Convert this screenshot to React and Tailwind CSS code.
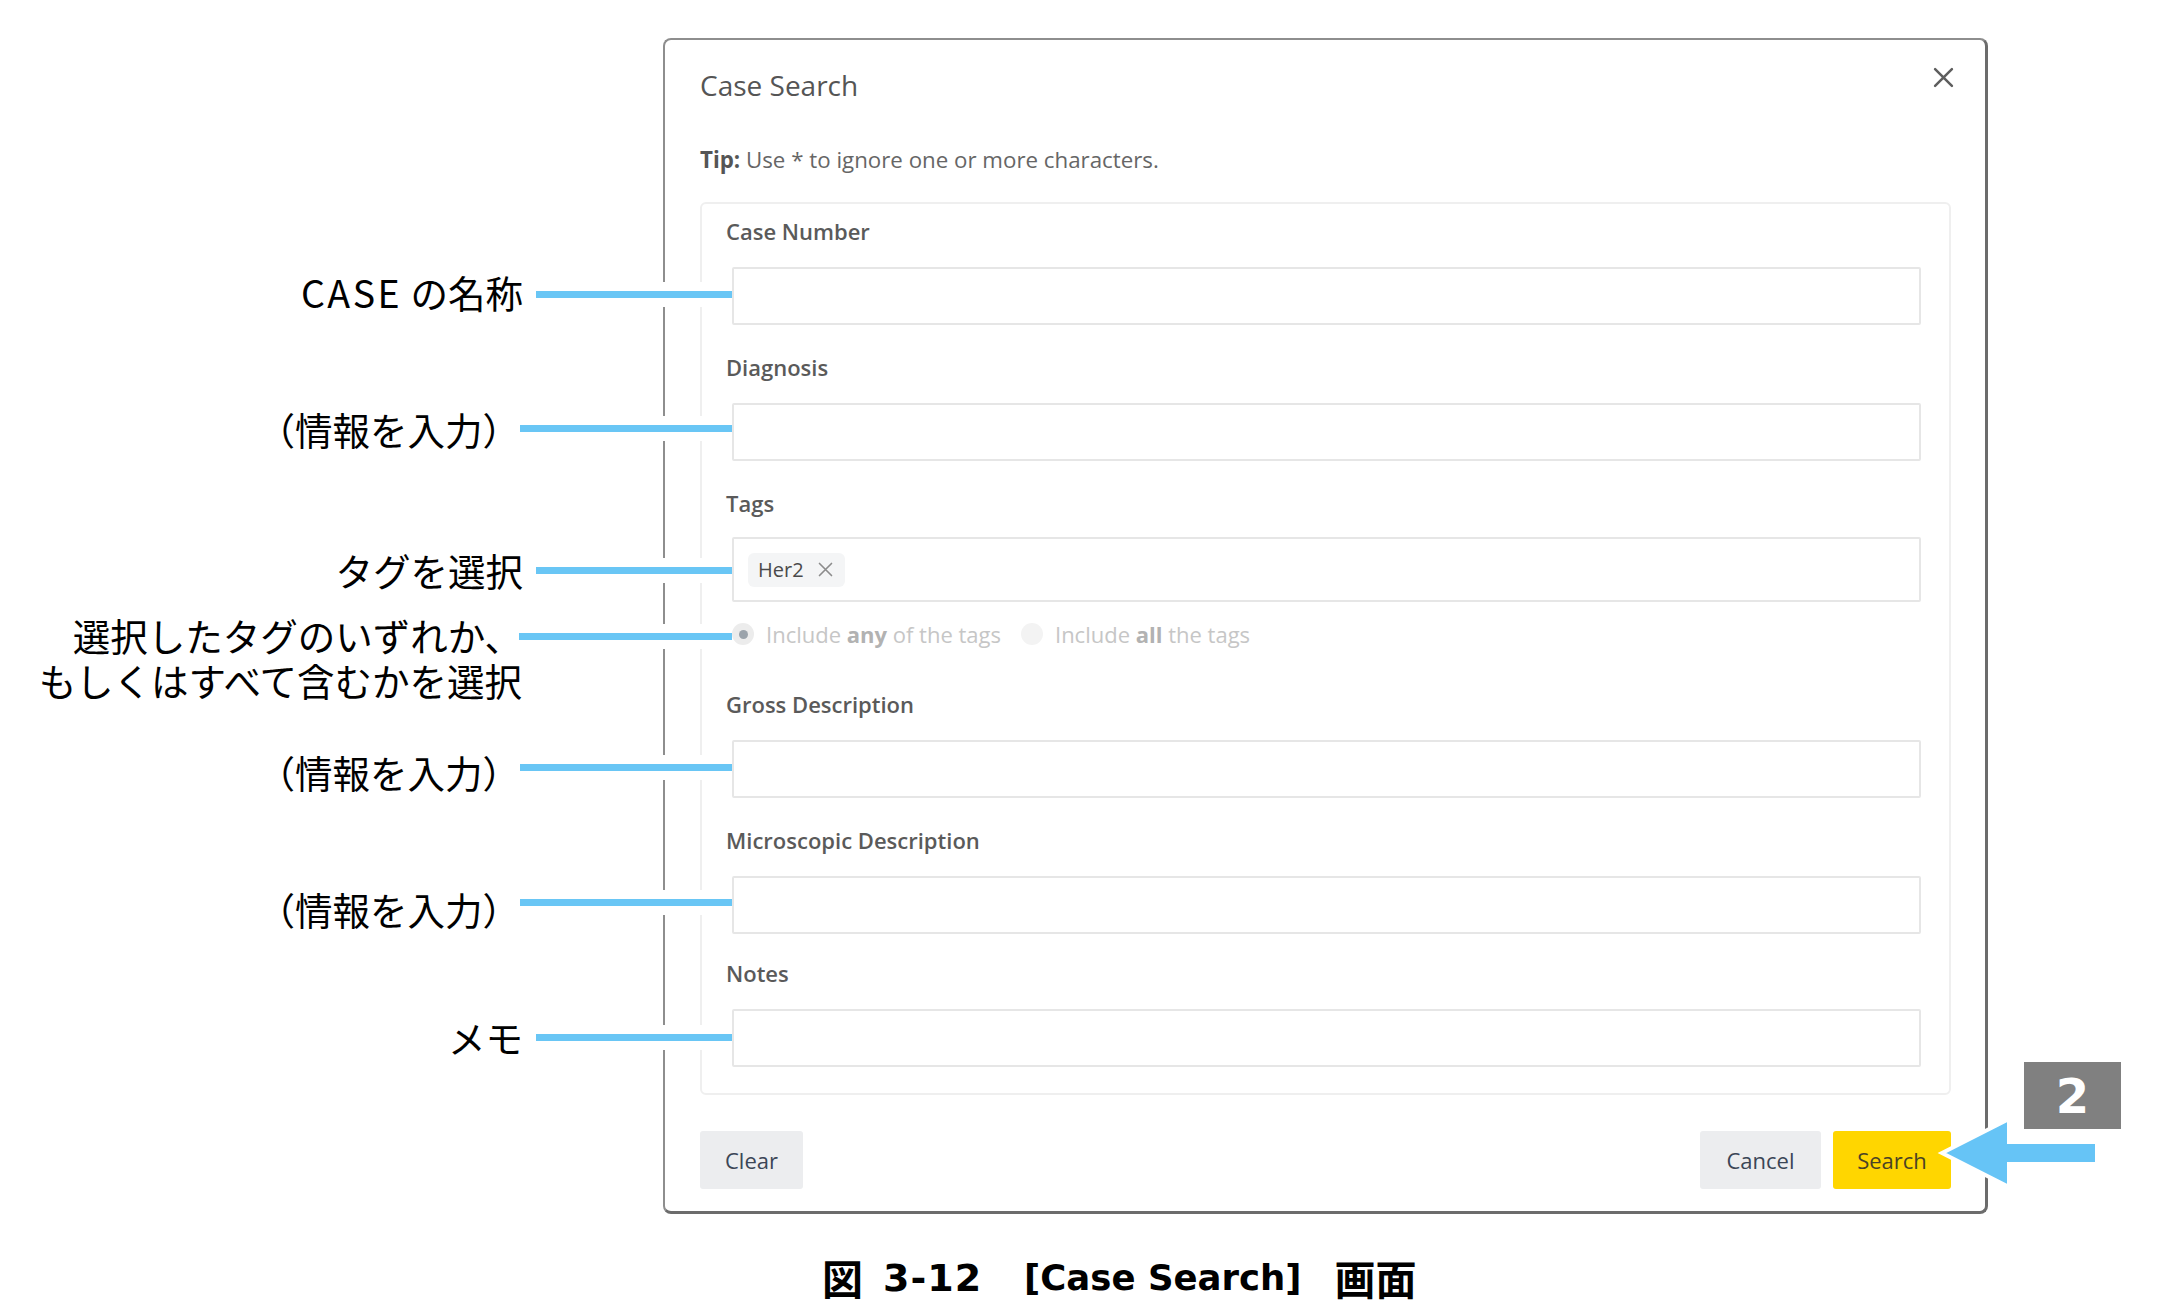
import { useState } from 'react';

const uiFont = { fontFamily: '"Segoe UI", "Open Sans", "Noto Sans", sans-serif' };
const jpFont = { fontFamily: '"Noto Sans CJK JP", "Noto Sans", sans-serif' };
const captionFont = { fontFamily: '"DejaVu Sans", "Noto Sans CJK JP", sans-serif' };

// callouts on the left: text, line centre (top + 22), text nudge, where the line starts, line width
const callouts = [
  { lines: [['CASE', ' の名称']], top: 272, nudge: -3, gap: 13, width: 196 },
  { lines: ['（情報を入力）'], top: 406, nudge: 0, gap: 0, width: 212 },
  { lines: ['タグを選択'], top: 548, nudge: -1, gap: 13, width: 196 },
  { lines: ['選択したタグのいずれか、', 'もしくはすべて含むかを選択'], top: 614, nudge: -2, gap: -3, width: 213 },
  { lines: ['（情報を入力）'], top: 745, nudge: 4, gap: 0, width: 212 },
  { lines: ['（情報を入力）'], top: 880, nudge: 6, gap: 0, width: 212 },
  { lines: ['メモ'], top: 1015, nudge: -1, gap: 13, width: 196 },
];

function CloseIcon({ size = 21, stroke = '#5e5e5e', width = 2.4 }) {
  return (
    <svg width={size} height={size} viewBox="0 0 20 20" fill="none">
      <path d="M2 2 L18 18 M18 2 L2 18" stroke={stroke} strokeWidth={width} strokeLinecap="round" />
    </svg>
  );
}

function Field({ label, children }) {
  return (
    <div className="flex flex-col">
      <label className="h-[30px] leading-[30px] text-[22px] font-semibold text-[#5a5a5a]">{label}</label>
      {children}
    </div>
  );
}

function TextInput() {
  return (
    <input
      type="text"
      className="mt-[21px] ml-[6px] mr-[4px] h-[58px] rounded-[2px] border-2 border-[#e6e6e6] bg-white px-3 text-[20px] outline-none"
    />
  );
}

function Callout({ lines, top, nudge, gap, width }) {
  return (
    <div className="absolute left-0 flex w-[732px] items-start justify-end" style={{ top }}>
      <div className="text-right text-[37.5px] leading-[45px] text-black" style={{ ...jpFont, marginTop: nudge }}>
        {lines.map((l, i) =>
          Array.isArray(l) ? (
            <div key={i}>
              <span className="tracking-[2.5px]">{l[0]}</span>
              {l[1]}
            </div>
          ) : (
            <div key={i}>{l}</div>
          )
        )}
      </div>
      <div className="flex h-[45px] items-center" style={{ marginLeft: gap }}>
        <div className="bg-white py-[9px]">
          <div className="h-[7px] bg-[#69c6f5]" style={{ width }} />
        </div>
      </div>
    </div>
  );
}

export default function App() {
  const [matchAll, setMatchAll] = useState(false);

  return (
    <div className="relative h-[1314px] w-[2160px] overflow-hidden bg-white">
      <div className="pt-[38px]">
        {/* dialog */}
        <div
          className="ml-[663px] w-[1325px] rounded-[8px] border-2 border-r-[3px] border-b-[3px] border-[#8e8e8e] border-r-[#6c6c6c] border-b-[#6c6c6c] bg-white pt-[25px] pr-[34px] pb-[22px] pl-[35px]"
          style={uiFont}
        >
          <div className="flex items-start justify-between">
            <h2 className="h-[40px] text-[28px] leading-[40px] font-normal text-[#555]">Case Search</h2>
            <button className="mt-[2px] mr-[-3px]">
              <CloseIcon />
            </button>
          </div>

          <p className="mt-[40px] h-[30px] text-[22.3px] leading-[30px] text-[#666]">
            <span className="font-bold text-[#555]">Tip:</span> Use * to ignore one or more characters.
          </p>

          {/* search fields */}
          <div className="mt-[27px] rounded-[6px] border-2 border-[#efefef] px-[24px] pt-[12px] pb-[26px]">
            <Field label="Case Number">
              <TextInput />
            </Field>
            <div className="mt-[27px]">
              <Field label="Diagnosis">
                <TextInput />
              </Field>
            </div>
            <div className="mt-[27px]">
              <Field label="Tags">
                <div className="mt-[19px] ml-[6px] mr-[4px] flex h-[65px] items-center rounded-[2px] border-2 border-[#e6e6e6] bg-white pl-[14px]">
                  <span className="flex h-[34px] items-center gap-[14px] rounded-[6px] bg-[#f4f5f6] pl-[10px] pr-[12px] text-[20px] text-[#4a4a4a]">
                    Her2
                    <CloseIcon size={15} stroke="#8c8c8c" width={2.2} />
                  </span>
                </div>
              </Field>
              <div className="mt-[17px] mx-[6px] flex h-[30px] items-center text-[22px] text-[#c6c6c6]">
                <button className="flex items-center gap-[12px]" onClick={() => setMatchAll(false)}>
                  <span className="flex h-[22px] w-[22px] items-center justify-center rounded-full bg-[#ececec]">
                    {!matchAll && <span className="h-[9px] w-[9px] rounded-full bg-[#9ba3ab]" />}
                  </span>
                  <span>
                    Include <b className="text-[#b2b2b2]">any</b> of the tags
                  </span>
                </button>
                <button className="ml-[20px] flex items-center gap-[12px]" onClick={() => setMatchAll(true)}>
                  <span className="flex h-[22px] w-[22px] items-center justify-center rounded-full bg-[#f3f3f3]">
                    {matchAll && <span className="h-[9px] w-[9px] rounded-full bg-[#9ba3ab]" />}
                  </span>
                  <span>
                    Include <b className="text-[#b2b2b2]">all</b> the tags
                  </span>
                </button>
              </div>
            </div>
            <div className="mt-[40px]">
              <Field label="Gross Description">
                <TextInput />
              </Field>
            </div>
            <div className="mt-[27px]">
              <Field label="Microscopic Description">
                <TextInput />
              </Field>
            </div>
            <div className="mt-[24px]">
              <Field label="Notes">
                <TextInput />
              </Field>
            </div>
          </div>

          {/* footer */}
          <div className="mt-[36px] flex items-center justify-between text-[22px]">
            <button className="h-[58px] w-[103px] rounded-[3px] bg-[#ecedef] text-[#3b4656]">Clear</button>
            <div className="flex gap-[12px]">
              <button className="h-[58px] w-[121px] rounded-[3px] bg-[#ecedef] text-[#3b4656]">Cancel</button>
              <button className="h-[58px] w-[118px] rounded-[3px] bg-[#ffd600] text-[#4a4326]">Search</button>
            </div>
          </div>
        </div>

        {/* figure caption */}
        <div className="mt-[40px] ml-[822px] flex h-[48px] items-center font-bold text-black" style={captionFont}>
          <span className="text-[41px]" style={jpFont}>図</span>
          <span className="ml-[20px] text-[38px] tracking-[1px]">3-12</span>
          <span className="ml-[42px] text-[35.5px]">[Case Search]</span>
          <span className="ml-[33px] text-[41px]" style={jpFont}>画面</span>
        </div>
      </div>

      {callouts.map((c, i) => (
        <Callout key={i} {...c} />
      ))}

      {/* step badge and pointer */}
      <div className="absolute top-[1062px] left-[2024px] flex h-[67px] w-[97px] items-center justify-center bg-[#808080] text-[48px] font-bold text-white" style={captionFont}>
        2
      </div>
      <svg className="absolute top-[1110px] left-[1934px]" width="170" height="86" viewBox="1934 1110 170 86">
        <polygon
          points="1942,1153 2009,1119 2009,1142 2097,1142 2097,1164 2009,1164 2009,1187"
          fill="#66c4f6"
          stroke="#ffffff"
          strokeWidth="4"
          strokeLinejoin="miter"
        />
      </svg>
    </div>
  );
}
